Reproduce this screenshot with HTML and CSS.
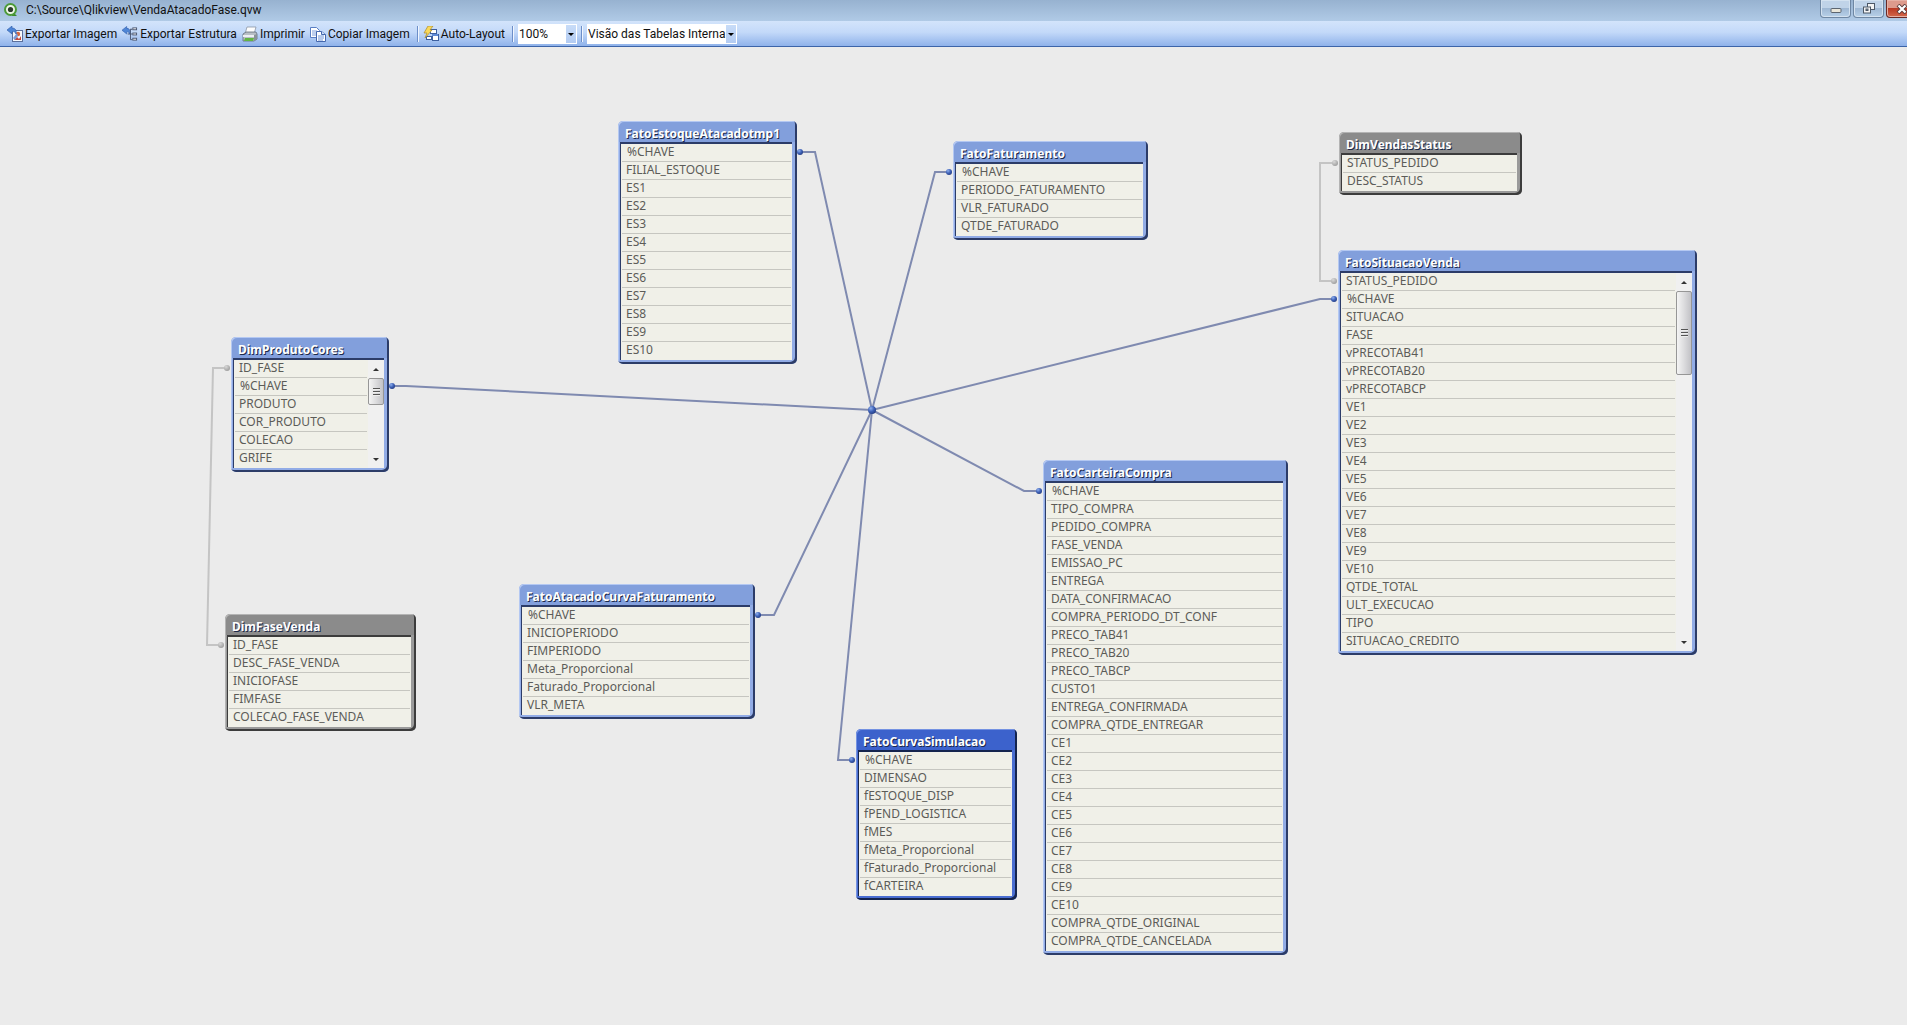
FILE: index.html
```html
<!DOCTYPE html>
<html lang="pt-BR">
<head>
<meta charset="utf-8">
<title>VendaAtacadoFase.qvw</title>
<link rel="stylesheet" href="styles.css">
</head>
<body>
<header class="titlebar">
  <svg class="app-icon" width="14" height="14" viewBox="0 0 14 14" aria-hidden="true">
    <path d="M8 8l5 5H8z" fill="#3c8a2c"/>
    <circle cx="6.500" cy="6.500" r="5.500" fill="#eef7e8" stroke="#4c9a38" stroke-width="2"/>
    <circle cx="6.500" cy="6.500" r="2.600" fill="#2c3a2c"/>
  </svg>
  <h1 class="title">C:\Source\Qlikview\VendaAtacadoFase.qvw</h1>
  <div class="window-buttons">
    <button class="window-button" type="button" aria-label="Minimizar">
      <svg width="12" height="10" viewBox="0 0 12 10"><rect x="1" y="4.500" width="10" height="4" rx="1" fill="#e9e6da" stroke="#5c6570"/></svg>
    </button>
    <button class="window-button" type="button" aria-label="Restaurar">
      <svg width="12" height="11" viewBox="0 0 12 11" fill="#f4f4f4" stroke="#4d5866"><rect x="4.500" y=".5" width="7" height="6"/><rect x=".5" y="4" width="7" height="6"/><rect x="3" y="6" width="2" height="1.500" fill="#9ab"/></svg>
    </button>
    <button class="window-button close" type="button" aria-label="Fechar">
      <svg width="12" height="10" viewBox="0 0 12 10"><path d="M2 1l8 8M10 1L2 9" stroke="#5b3a3a" stroke-width="4"/><path d="M2.500 1.500l7 7M9.500 1.500l-7 7" stroke="#fff" stroke-width="2.200"/></svg>
    </button>
  </div>
</header>

<nav class="toolbar" aria-label="Ferramentas">
  <button class="tool" type="button">
    <svg width="16" height="16" viewBox="0 0 16 16" aria-hidden="true">
      <rect x="5.500" y="4.500" width="10" height="11" fill="#f7f9fd" stroke="#5b6f9c"/>
      <circle cx="11" cy="8" r="2.200" fill="#d9663c"/><path d="M7 14l3-3 2 2 2-3v4z" fill="#c4473a"/><path d="M6 12l4-5 1 3-3 4z" fill="#7b9cd8"/>
      <path d="M0 4l5-4v2c3 0 5 2 4 6-1-2-2-3-4-2v2z" fill="#4f86d6" stroke="#2c5aa8" stroke-width=".6"/>
    </svg>Exportar Imagem</button>
  <button class="tool" type="button">
    <svg width="16" height="16" viewBox="0 0 17 16" aria-hidden="true">
      <path d="M10 3h-1v11h2M6 8h5M9 3h2" fill="none" stroke="#4a5670"/>
      <rect x="11.500" y="1.500" width="4" height="2" fill="#fff" stroke="#4a5670"/><rect x="11.500" y="7" width="4" height="2" fill="#fff" stroke="#4a5670"/><rect x="11.500" y="12.500" width="4" height="2" fill="#fff" stroke="#4a5670"/>
      <path d="M0 4l5-4v2c3 0 4 2 3 6-1-2-1-3-3-2v2z" fill="#4f86d6" stroke="#2c5aa8" stroke-width=".6"/>
    </svg>Exportar Estrutura</button>
  <button class="tool" type="button">
    <svg width="16" height="16" viewBox="0 0 16 16" aria-hidden="true">
      <path d="M5 1h9l-2 7H3z" fill="#fdfdfd" stroke="#8b95a5" stroke-width=".8"/>
      <path d="M1 8l3-2h10l1 2v5l-3 2H1z" fill="#b9bfc6" stroke="#616c78" stroke-width=".8"/>
      <path d="M1 9h11v2H1z" fill="#eceff2"/><path d="M3 12h9l-1 3H2z" fill="#62b544"/><path d="M12 9l3-1v5l-3 2z" fill="#8a9299"/>
    </svg>Imprimir</button>
  <button class="tool" type="button">
    <svg width="16" height="16" viewBox="0 0 16 16" aria-hidden="true">
      <path d="M.5 1.500h6l3 3v7h-9z" fill="#fff" stroke="#5a7fc4"/><path d="M2 5h5M2 7h5M2 9h5" stroke="#7ea0dc"/>
      <path d="M6.500 5.500h5l4 3v7h-9z" fill="#fff" stroke="#4467ad"/><path d="M11.500 5.500v3h4" fill="#cfe0fa" stroke="#4467ad"/><path d="M8 10h6M8 12h6M8 14h5" stroke="#6f94d8"/>
    </svg>Copiar Imagem</button>
  <span class="separator"></span>
  <button class="tool" type="button">
    <svg width="16" height="16" viewBox="0 0 16 16" aria-hidden="true">
      <rect x="7.500" y="3.500" width="6" height="4" fill="#fff" stroke="#3d5f9f"/><rect x="9.500" y="8.500" width="6" height="6" fill="#fff" stroke="#3d5f9f"/><rect x="3.500" y="10.500" width="5" height="3" fill="#fff" stroke="#3d5f9f"/>
      <path d="M9 8h6v2H9z" fill="#5f8ad6"/>
      <path d="M5 0h5L7 4h2L2 12l2-5H1z" fill="#f9d95a" stroke="#a98a2c" stroke-width=".7"/>
    </svg>Auto-Layout</button>
  <span class="separator"></span>
  <span class="combo zoom-combo"><select aria-label="Zoom"><option>100%</option></select></span>
  <span class="separator"></span>
  <span class="combo view-combo"><select aria-label="Visão"><option>Visão das Tabelas Interna</option></select></span>
</nav>

<main class="canvas">
  <svg class="links" aria-hidden="true">
    <defs>
      <radialGradient id="blue" cx=".35" cy=".3" r=".8"><stop offset="0" stop-color="#8fb0ee"/><stop offset=".5" stop-color="#3f62b8"/><stop offset="1" stop-color="#20377c"/></radialGradient>
      <radialGradient id="gray" cx=".35" cy=".3" r=".8"><stop offset="0" stop-color="#d8d8d8"/><stop offset="1" stop-color="#989898"/></radialGradient>
    </defs>
    <g class="gray-links">
      <path d="M227 321h-14l-6 277h14"/>
      <path d="M1335 116h-15v118h14"/>
    </g>
    <g class="blue-links">
      <path d="M800 105h15l57 258"/>
      <path d="M949 125h-14l-63 238"/>
      <path d="M1334 252h-14L872 363"/>
      <path d="M392 339h14l466 24"/>
      <path d="M1039 444h-15L872 363"/>
      <path d="M758 568h16l98-205"/>
      <path d="M852 713h-14l34-350"/>
    </g>
    <g fill="url(#gray)"><circle cx="227" cy="321" r="3"/><circle cx="221" cy="598" r="3"/><circle cx="1335" cy="116" r="3"/><circle cx="1334" cy="234" r="3"/></g>
    <g fill="url(#blue)"><circle cx="800" cy="105" r="3"/><circle cx="949" cy="125" r="3"/><circle cx="1334" cy="252" r="3"/><circle cx="392" cy="339" r="3"/><circle cx="1039" cy="444" r="3"/><circle cx="758" cy="568" r="3"/><circle cx="852" cy="713" r="3"/><circle cx="872" cy="363" r="4"/></g>
  </svg>

  <section class="entity estoque">
    <h2>FatoEstoqueAtacadotmp1</h2>
    <div class="body"><ul>
      <li class="key">%CHAVE</li><li>FILIAL_ESTOQUE</li><li>ES1</li><li>ES2</li><li>ES3</li><li>ES4</li><li>ES5</li><li>ES6</li><li>ES7</li><li>ES8</li><li>ES9</li><li>ES10</li>
    </ul></div>
  </section>

  <section class="entity faturamento">
    <h2>FatoFaturamento</h2>
    <div class="body"><ul>
      <li class="key">%CHAVE</li><li>PERIODO_FATURAMENTO</li><li>VLR_FATURADO</li><li>QTDE_FATURADO</li>
    </ul></div>
  </section>

  <section class="entity status dimension">
    <h2>DimVendasStatus</h2>
    <div class="body"><ul>
      <li>STATUS_PEDIDO</li><li>DESC_STATUS</li>
    </ul></div>
  </section>

  <section class="entity situacao">
    <h2>FatoSituacaoVenda</h2>
    <div class="body">
      <ul>
        <li>STATUS_PEDIDO</li><li class="key">%CHAVE</li><li>SITUACAO</li><li>FASE</li><li>vPRECOTAB41</li><li>vPRECOTAB20</li><li>vPRECOTABCP</li><li>VE1</li><li>VE2</li><li>VE3</li><li>VE4</li><li>VE5</li><li>VE6</li><li>VE7</li><li>VE8</li><li>VE9</li><li>VE10</li><li>QTDE_TOTAL</li><li>ULT_EXECUCAO</li><li>TIPO</li><li>SITUACAO_CREDITO</li>
      </ul>
      <div class="scrollbar">
        <button class="arrow up" type="button" aria-label="Rolar para cima"></button>
        <div class="track"><span class="thumb long"></span></div>
        <button class="arrow down" type="button" aria-label="Rolar para baixo"></button>
      </div>
    </div>
  </section>

  <section class="entity produto">
    <h2>DimProdutoCores</h2>
    <div class="body">
      <ul>
        <li>ID_FASE</li><li class="key">%CHAVE</li><li>PRODUTO</li><li>COR_PRODUTO</li><li>COLECAO</li><li>GRIFE</li>
      </ul>
      <div class="scrollbar">
        <button class="arrow up" type="button" aria-label="Rolar para cima"></button>
        <div class="track"><span class="thumb"></span></div>
        <button class="arrow down" type="button" aria-label="Rolar para baixo"></button>
      </div>
    </div>
  </section>

  <section class="entity fase dimension">
    <h2>DimFaseVenda</h2>
    <div class="body"><ul>
      <li>ID_FASE</li><li>DESC_FASE_VENDA</li><li>INICIOFASE</li><li>FIMFASE</li><li>COLECAO_FASE_VENDA</li>
    </ul></div>
  </section>

  <section class="entity curva">
    <h2>FatoAtacadoCurvaFaturamento</h2>
    <div class="body"><ul>
      <li class="key">%CHAVE</li><li>INICIOPERIODO</li><li>FIMPERIODO</li><li>Meta_Proporcional</li><li>Faturado_Proporcional</li><li>VLR_META</li>
    </ul></div>
  </section>

  <section class="entity carteira">
    <h2>FatoCarteiraCompra</h2>
    <div class="body"><ul>
      <li class="key">%CHAVE</li><li>TIPO_COMPRA</li><li>PEDIDO_COMPRA</li><li>FASE_VENDA</li><li>EMISSAO_PC</li><li>ENTREGA</li><li>DATA_CONFIRMACAO</li><li>COMPRA_PERIODO_DT_CONF</li><li>PRECO_TAB41</li><li>PRECO_TAB20</li><li>PRECO_TABCP</li><li>CUSTO1</li><li>ENTREGA_CONFIRMADA</li><li>COMPRA_QTDE_ENTREGAR</li><li>CE1</li><li>CE2</li><li>CE3</li><li>CE4</li><li>CE5</li><li>CE6</li><li>CE7</li><li>CE8</li><li>CE9</li><li>CE10</li><li>COMPRA_QTDE_ORIGINAL</li><li>COMPRA_QTDE_CANCELADA</li>
    </ul></div>
  </section>

  <section class="entity simulacao selected">
    <h2>FatoCurvaSimulacao</h2>
    <div class="body"><ul>
      <li class="key">%CHAVE</li><li>DIMENSAO</li><li>fESTOQUE_DISP</li><li>fPEND_LOGISTICA</li><li>fMES</li><li>fMeta_Proporcional</li><li>fFaturado_Proporcional</li><li>fCARTEIRA</li>
    </ul></div>
  </section>
</main>
</body>
</html>
```
FILE: styles.css
```css
* { box-sizing: border-box; }

body {
  display: flex;
  flex-direction: column;
  min-height: 100vh;
  margin: 0;
  overflow-x: hidden;
  background: #ebebeb;
  font: 12px/16px Roboto, "Open Sans", sans-serif;
  color: #111;
}

button, select { font: inherit; color: inherit; }

/* Title bar */
.titlebar {
  display: flex;
  align-items: center;
  height: 21px;
  padding-left: 4px;
  overflow: hidden;
  background: linear-gradient(#97b2d0, #b0cae6);
}
.app-icon { flex: none; margin-bottom: 2px; }
.title {
  flex: 1;
  margin: 0 0 1px 8px;
  font: inherit;
}
.window-buttons {
  display: flex;
  align-self: flex-start;
  gap: 2px;
  height: 18px;
  margin-right: -10px;
}
.window-button {
  display: flex;
  align-items: center;
  justify-content: center;
  width: 31px;
  padding: 0;
  border: 1px solid #6f87a3;
  border-top: 0;
  border-radius: 0 0 4px 4px;
  background: linear-gradient(#c0d3e8 50%, #9fb8d4 50%, #b7d0e8);
  box-shadow: inset 0 0 0 1px #d4e2f0;
}
.window-button.close {
  border-color: #6a2a26;
  background: linear-gradient(#dd9a8c 50%, #bb3a24 50%, #d2684c);
  box-shadow: inset 0 0 0 1px #e6b0a4;
}

/* Toolbar */
.toolbar {
  display: flex;
  align-items: center;
  height: 26px;
  padding: 0 7px;
  border-bottom: 1px solid #3c64a8;
  background: linear-gradient(#d3e4fb, #c3d9f9 45%, #8fb2ea);
}
.tool {
  display: flex;
  align-items: center;
  gap: 2px;
  margin-right: 5px;
  padding: 0;
  border: 0;
  background: none;
  white-space: nowrap;
}
.separator {
  width: 2px;
  height: 16px;
  margin: 0 4px 0 2px;
  border-left: 1px solid #6c8ec8;
  border-right: 1px solid #f0f6ff;
}
.combo {
  position: relative;
  height: 20px;
  margin-right: 2px;
  border: 1px solid #fff;
  background: linear-gradient(#c8dcf8, #b2cbf2);
}
.combo::after {
  content: "";
  position: absolute;
  top: 8px;
  right: 2px;
  border: 3px solid transparent;
  border-top-color: #000;
  border-bottom: 0;
}
.combo select {
  display: block;
  width: calc(100% - 10px);
  height: 18px;
  padding: 0;
  border: 0;
  border-radius: 0;
  appearance: none;
  background: #fff;
}
.zoom-combo { width: 59px; }
.view-combo { width: 150px; }

/* Diagram */
.canvas {
  position: relative;
  flex: 1;
  overflow: hidden;
}
.links {
  position: absolute;
  inset: 0;
  width: 100%;
  height: 100%;
  fill: none;
}
.blue-links { stroke: #7f8ab0; stroke-width: 2; }
.gray-links { stroke: #c4c4c4; stroke-width: 2; }

.entity {
  --head: #829fdc;
  --edge: #92ace6;
  --light: #b4c8f2;
  --dark: #2c3c68;
  position: absolute;
  padding: 1px 5px 4px 2px;
  border-radius: 5px;
  background: linear-gradient(var(--head) 21px, var(--edge) 21px);
  box-shadow: inset -2px -2px 0 var(--dark), inset 1px 1px 0 var(--light);
}
.entity.dimension {
  --head: #8b8b8b;
  --edge: #9a9a9a;
  --light: #b4b4b4;
  --dark: #3c3c3c;
}
.entity.selected {
  --head: #3c62cc;
  --edge: #4a6ed2;
  --light: #7492e2;
  --dark: #14244e;
}
.entity h2 {
  height: 20px;
  margin: 0;
  padding-left: 5px;
  color: #fff;
  font: bold 12px/23px "Noto Sans", sans-serif;
  text-shadow: 1px 1px 0 #1c2a4a;
  white-space: nowrap;
}
.body {
  display: flex;
  border-top: 2px solid var(--dark);
  border-left: 1px solid var(--dark);
  background: #f0f0e8;
}
.entity ul {
  flex: 1;
  margin: 0;
  padding: 0 1px;
  list-style: none;
}
.entity li {
  height: 18px;
  padding-left: 4px;
  border-bottom: 1px solid #c6c6c0;
  color: #5c5c58;
  font: 12px/16px "Noto Sans", sans-serif;
  white-space: nowrap;
}
.entity li:last-child { border-bottom-color: transparent; }
.entity li.key { padding-left: 5px; }

.scrollbar {
  display: flex;
  flex-direction: column;
  width: 16px;
  background: #f0f0f0;
}
.arrow {
  height: 18px;
  padding: 0;
  border: 0;
  background: none;
}
.arrow::before {
  content: "";
  display: block;
  width: 0;
  margin: 0 auto;
  border: 3px solid transparent;
}
.arrow.up::before { border-top: 0; border-bottom-color: #333; }
.arrow.down::before { border-bottom: 0; border-top-color: #333; }
.track { flex: 1; }
.thumb {
  display: flex;
  align-items: center;
  justify-content: center;
  height: 27px;
  border: 1px solid #969696;
  border-radius: 2px;
  background: linear-gradient(90deg, #f4f4f4, #dcdcde 50%, #c2c2c6);
}
.thumb.long { height: 84px; }
.thumb::before {
  content: "";
  width: 7px;
  height: 8px;
  background: repeating-linear-gradient(#555 0 1px, #eee 1px 2px, transparent 2px 3px);
}

/* Node places on the canvas */
.estoque { left: 618px; top: 74px; width: 179px; }
.faturamento { left: 953px; top: 94px; width: 195px; }
.status { left: 1339px; top: 85px; width: 183px; }
.situacao { left: 1338px; top: 203px; width: 359px; }
.produto { left: 231px; top: 290px; width: 158px; }
.fase { left: 225px; top: 567px; width: 191px; }
.curva { left: 519px; top: 537px; width: 236px; }
.carteira { left: 1043px; top: 413px; width: 245px; }
.simulacao { left: 856px; top: 682px; width: 161px; }
```
